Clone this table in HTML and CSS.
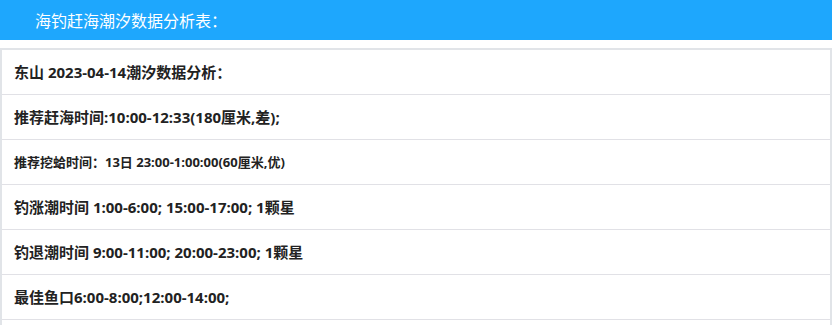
FILE: index.html
```html
<!DOCTYPE html>
<html lang="zh-CN">
<head>
<meta charset="utf-8">
<title>海钓赶海潮汐数据分析表</title>
<link rel="stylesheet" href="styles.css">
</head>
<body>
<header class="title-bar">海钓赶海潮汐数据分析表：</header>
<section class="panel">
  <div class="row">东山 2023-04-14潮汐数据分析：</div>
  <div class="row">推荐赶海时间:10:00-12:33(180厘米,差);</div>
  <div class="row small">推荐挖蛤时间：13日 23:00-1:00:00(60厘米,优)</div>
  <div class="row">钓涨潮时间 1:00-6:00; 15:00-17:00; 1颗星</div>
  <div class="row">钓退潮时间 9:00-11:00; 20:00-23:00; 1颗星</div>
  <div class="row">最佳鱼口6:00-8:00;12:00-14:00;</div>
  <div class="row"></div>
</section>
</body>
</html>
```
FILE: styles.css
```css
html, body {
  margin: 0;
  padding: 0;
  background: #ffffff;
}
body {
  font-family: "Open Sans", "Noto Sans CJK SC", sans-serif;
  color: #222222;
}
.title-bar {
  height: 40px;
  background: #1ea7fd;
  color: #ffffff;
  font-size: 16px;
  line-height: 40px;
  padding-left: 35px;
  box-sizing: border-box;
  font-family: "Noto Sans CJK SC", sans-serif;
}
.panel {
  margin-top: 8px;
  border: 2px solid #e1e4e8;
  border-bottom: none;
}
.row {
  height: 44px;
  line-height: 44px;
  border-bottom: 1px solid #e1e1e6;
  padding-left: 12px;
  font-size: 15px;
  font-weight: 700;
  white-space: nowrap;
}
.row.small {
  font-size: 13px;
}
```
